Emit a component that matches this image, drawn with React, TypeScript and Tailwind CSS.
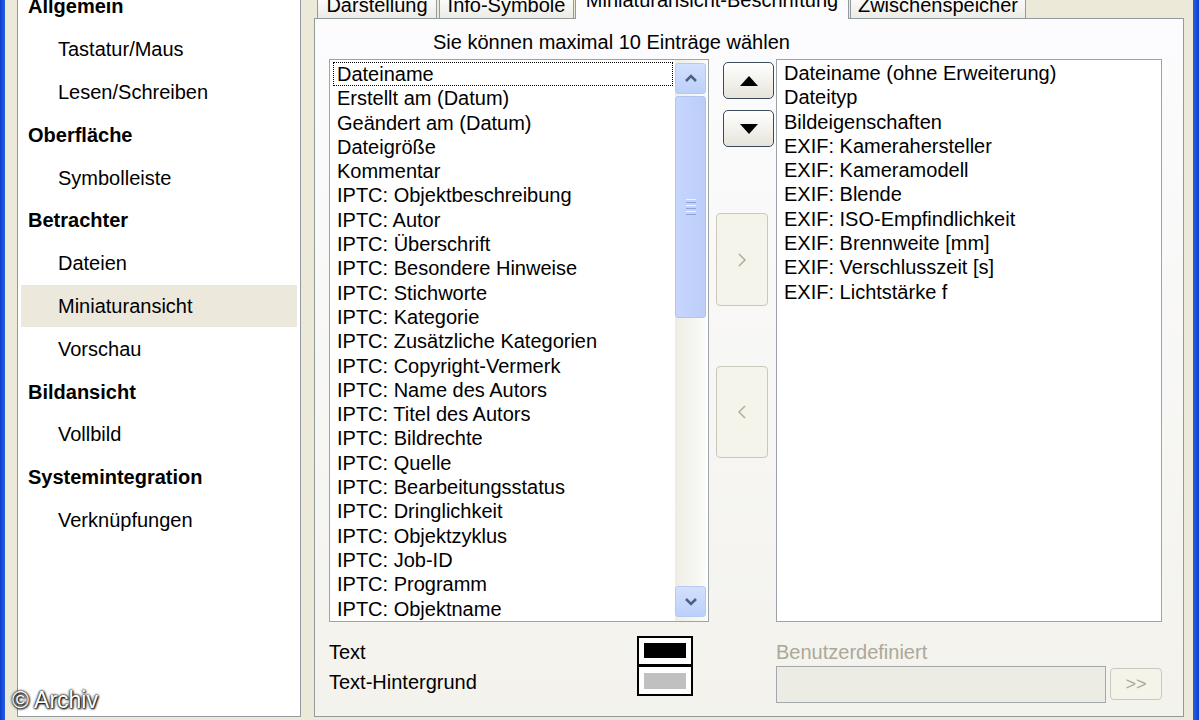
import React from "react";

const navItems: { t: string; h?: boolean; sel?: boolean }[] = [
  { t: "Allgemein", h: true },
  { t: "Tastatur/Maus" },
  { t: "Lesen/Schreiben" },
  { t: "Oberfläche", h: true },
  { t: "Symbolleiste" },
  { t: "Betrachter", h: true },
  { t: "Dateien" },
  { t: "Miniaturansicht", sel: true },
  { t: "Vorschau" },
  { t: "Bildansicht", h: true },
  { t: "Vollbild" },
  { t: "Systemintegration", h: true },
  { t: "Verknüpfungen" },
];

const leftItems = [
  "Dateiname",
  "Erstellt am (Datum)",
  "Geändert am (Datum)",
  "Dateigröße",
  "Kommentar",
  "IPTC: Objektbeschreibung",
  "IPTC: Autor",
  "IPTC: Überschrift",
  "IPTC: Besondere Hinweise",
  "IPTC: Stichworte",
  "IPTC: Kategorie",
  "IPTC: Zusätzliche Kategorien",
  "IPTC: Copyright-Vermerk",
  "IPTC: Name des Autors",
  "IPTC: Titel des Autors",
  "IPTC: Bildrechte",
  "IPTC: Quelle",
  "IPTC: Bearbeitungsstatus",
  "IPTC: Dringlichkeit",
  "IPTC: Objektzyklus",
  "IPTC: Job-ID",
  "IPTC: Programm",
  "IPTC: Objektname",
];

const rightItems = [
  "Dateiname (ohne Erweiterung)",
  "Dateityp",
  "Bildeigenschaften",
  "EXIF: Kamerahersteller",
  "EXIF: Kameramodell",
  "EXIF: Blende",
  "EXIF: ISO-Empfindlichkeit",
  "EXIF: Brennweite [mm]",
  "EXIF: Verschlusszeit [s]",
  "EXIF: Lichtstärke f",
];

function ScrollArrow({ up }: { up: boolean }) {
  return (
    <div className="h-[31px] w-full rounded-[3px] border border-[#b5c9f3] bg-linear-to-b from-[#d3e0fd] to-[#bcd0fa] flex items-center justify-center">
      <svg width="14" height="9" viewBox="0 0 14 9">
        <path
          d={up ? "M2 7 L7 2 L12 7" : "M2 2 L7 7 L12 2"}
          fill="none"
          stroke="#4d6185"
          strokeWidth="2.6"
        />
      </svg>
    </div>
  );
}

function Tab({ label, w, sel }: { label: string; w: string; sel?: boolean }) {
  if (sel) {
    return (
      <div
        className={`${w} h-[30px] -mb-px relative z-10 ml-px rounded-t-[4px] border border-b-0 border-[#919b9c] bg-[#fcfcfe] flex justify-center leading-[20px] whitespace-nowrap`}
      >
        {label}
      </div>
    );
  }
  return (
    <div
      className={`${w} h-[24px] rounded-t-[4px] border border-b-0 border-[#919b9c] bg-linear-to-b from-white to-[#ecebe5] flex justify-center leading-[20px] whitespace-nowrap`}
    >
      {label}
    </div>
  );
}

export default function App() {
  return (
    <div className="w-[1199px] h-[720px] overflow-hidden bg-[#ece9d8] flex relative font-['Liberation_Sans',Arial,sans-serif] text-[20px] text-black">
      {/* left window border */}
      <div className="w-[5px] shrink-0 bg-linear-to-r from-[#0a3fd0] to-[#2a5fe0]" />

      {/* left navigation panel */}
      <div className="ml-[12px] w-[284px] h-[717px] shrink-0 border-x border-b border-[#8f9aa5] bg-white overflow-hidden">
        <div className="-mt-[15px] px-[3px] flex flex-col">
          {navItems.map((it) => (
            <div
              key={it.t}
              className={`h-[42.8px] flex items-center whitespace-nowrap ${
                it.h ? "pl-[7px] font-bold" : "pl-[37px]"
              } ${it.sel ? "bg-[#ece8dc]" : ""}`}
            >
              {it.t}
            </div>
          ))}
        </div>
      </div>

      {/* tab control */}
      <div className="ml-[13px] w-[870px] shrink-0 flex flex-col">
        <div className="h-[18px] flex items-end pl-[3px] relative z-10">
          <Tab label="Darstellung" w="w-[120px]" />
          <div className="w-[2px]" />
          <Tab label="Info-Symbole" w="w-[135px]" />
          <Tab label="Miniaturansicht-Beschriftung" w="w-[274px]" sel />
          <div className="w-[1px]" />
          <Tab label="Zwischenspeicher" w="w-[176px]" />
        </div>

        <div className="h-[699px] border border-[#919b9c] bg-linear-to-b from-[#fcfcfe] to-[#f3f2ec] pl-[14px] flex flex-col">
          <div className="mt-[11px] pl-[104px] h-[24px] leading-[24px] whitespace-nowrap">
            Sie können maximal 10 Einträge wählen
          </div>

          <div className="mt-[5px] h-[563px] flex">
            {/* left list */}
            <div className="w-[380px] h-full border border-[#9ca3ab] bg-white flex overflow-hidden">
              <div className="flex-1 pt-[2px] pl-[3px] pr-[2px] overflow-hidden">
                {leftItems.map((t, i) => (
                  <div
                    key={t}
                    className={`h-[24.3px] leading-[23px] pl-[3px] whitespace-nowrap ${
                      i === 0 ? "border border-dotted border-black" : "border border-transparent"
                    }`}
                  >
                    {t}
                  </div>
                ))}
              </div>
              <div className="w-[31px] mr-[2px] pt-[3px] pb-[4px] flex flex-col bg-linear-to-r from-[#eeede5] to-[#fbfbf8]">
                <ScrollArrow up />
                <div className="mt-[2px] h-[222px] rounded-[3px] border border-[#b0c4f2] bg-linear-to-r from-[#c6d6fc] to-[#bccdf9] flex flex-col items-center justify-center gap-[2px]">
                  <div className="w-[10px] h-[1px] bg-[#eef3ff]" />
                  <div className="w-[10px] h-[1px] bg-[#8da4d8]" />
                  <div className="w-[10px] h-[1px] bg-[#eef3ff]" />
                  <div className="w-[10px] h-[1px] bg-[#8da4d8]" />
                  <div className="w-[10px] h-[1px] bg-[#eef3ff]" />
                  <div className="w-[10px] h-[1px] bg-[#8da4d8]" />
                </div>
                <div className="flex-1" />
                <ScrollArrow up={false} />
              </div>
            </div>

            {/* buttons column */}
            <div className="w-[67px] flex flex-col">
              <div className="ml-[14px] mt-[3px] w-[51px] h-[37px] rounded-[5px] border border-[#3b4a5c] bg-linear-to-b from-white to-[#e6e4da] flex items-center justify-center">
                <svg width="18" height="10" viewBox="0 0 18 10">
                  <polygon points="9,0 18,10 0,10" fill="#000" />
                </svg>
              </div>
              <div className="ml-[14px] mt-[11px] w-[51px] h-[37px] rounded-[5px] border border-[#3b4a5c] bg-linear-to-b from-white to-[#e6e4da] flex items-center justify-center">
                <svg width="18" height="10" viewBox="0 0 18 10">
                  <polygon points="0,0 18,0 9,10" fill="#000" />
                </svg>
              </div>
              <div className="ml-[7px] mt-[66px] w-[52px] h-[93px] rounded-[4px] border border-[#cac8bb] bg-[#f5f4ea] flex items-center justify-center">
                <svg width="10" height="16" viewBox="0 0 10 16">
                  <path d="M2 2 L8 8 L2 14" fill="none" stroke="#aca899" strokeWidth="1.4" />
                </svg>
              </div>
              <div className="ml-[7px] mt-[60px] w-[52px] h-[92px] rounded-[4px] border border-[#cac8bb] bg-[#f5f4ea] flex items-center justify-center">
                <svg width="10" height="16" viewBox="0 0 10 16">
                  <path d="M8 2 L2 8 L8 14" fill="none" stroke="#aca899" strokeWidth="1.4" />
                </svg>
              </div>
            </div>

            {/* right list */}
            <div className="w-[386px] h-full border border-[#9ca3ab] bg-white pt-[2px] pl-[6px] overflow-hidden">
              {rightItems.map((t) => (
                <div key={t} className="h-[24.3px] leading-[23px] pl-px whitespace-nowrap">
                  {t}
                </div>
              ))}
            </div>
          </div>

          {/* bottom area */}
          <div className="mt-[14px] flex">
            <div className="w-[447px] flex">
              <div className="w-[308px] pt-[1px] flex flex-col">
                <div className="h-[30px] leading-[30px]">Text</div>
                <div className="h-[30px] leading-[30px]">Text-Hintergrund</div>
              </div>
              <div className="w-[56px] flex flex-col">
                <div className="h-[30px] border-2 border-black bg-white px-[5px] pt-[5px] pb-[6px]">
                  <div className="w-full h-full bg-black" />
                </div>
                <div className="-mt-[1px] h-[31px] border-2 border-black bg-white px-[5px] pt-[6px] pb-[5px]">
                  <div className="w-full h-full bg-[#c0c0c0]" />
                </div>
              </div>
            </div>
            <div className="pt-[2px] flex flex-col">
              <div className="h-[28px] leading-[28px] text-[#aca899]">Benutzerdefiniert</div>
              <div className="flex items-start">
                <div className="w-[330px] h-[37px] border border-[#a3a8ad] bg-[#ecebe4]" />
                <div className="ml-[4px] mt-[2px] w-[52px] h-[32px] rounded-[4px] border border-[#cac8bb] bg-[#f5f4ea] flex items-center justify-center text-[#aca899] text-[18px] leading-none">
                  &gt;&gt;
                </div>
              </div>
            </div>
          </div>
        </div>
      </div>

      <div className="w-[9px] shrink-0" />
      {/* right window border */}
      <div className="w-[6px] shrink-0 bg-linear-to-r from-[#2a5fe0] to-[#0a3fd0]" />

      {/* watermark */}
      <div className="absolute left-[12px] top-[683px] text-[23px] text-white [text-shadow:0_0_2px_#000,0_0_3px_#000,1px_1px_2px_#000]">
        © Archiv
      </div>
    </div>
  );
}
